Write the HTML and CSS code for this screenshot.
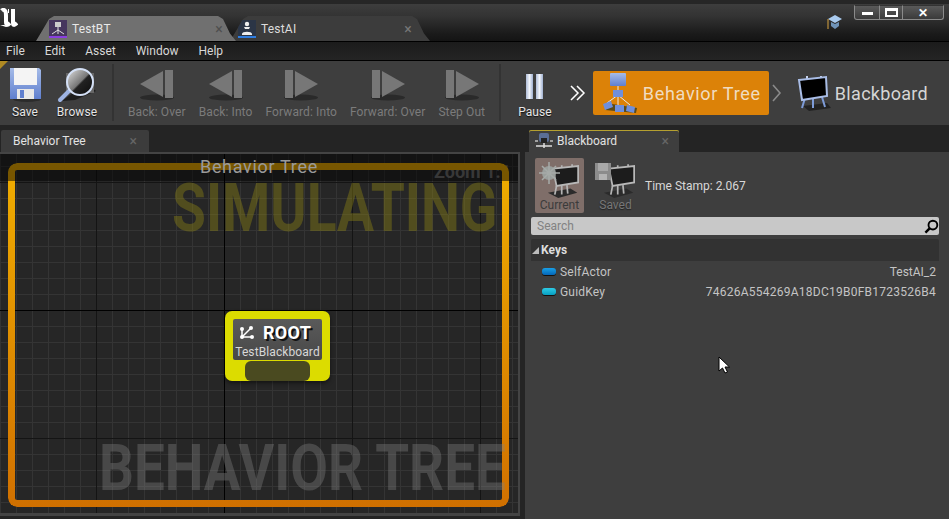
FILE: index.html
```html
<!DOCTYPE html>
<html lang="en">
<head>
<meta charset="utf-8">
<title>TestBT</title>
<link rel="stylesheet" href="styles.css">
</head>
<body>
<svg class="defs" width="0" height="0" aria-hidden="true">
  <defs>
    <linearGradient id="blueg" x1="0" y1="0" x2="0" y2="1"><stop offset="0" stop-color="#a6bce8"/><stop offset="1" stop-color="#5f7fcf"/></linearGradient>
    <linearGradient id="pauseg" x1="0" y1="0" x2="1" y2="0"><stop offset="0" stop-color="#aebcd8"/><stop offset=".5" stop-color="#f2f5fb"/><stop offset="1" stop-color="#9fb0d0"/></linearGradient>
    <linearGradient id="lens" x1="0" y1="0" x2="1" y2="1"><stop offset="0" stop-color="#e4e4e4"/><stop offset=".5" stop-color="#777"/><stop offset=".55" stop-color="#222"/><stop offset="1" stop-color="#0c0c0c"/></linearGradient>
    <symbol id="back" viewBox="0 0 36 32">
      <ellipse cx="18" cy="28.500" rx="17" ry="3" fill="#2a2a2a"/>
      <path d="M1 15 24 2V28Z" fill="#777"/>
      <rect x="26" y="1" width="8" height="28" fill="#777"/>
    </symbol>
    <symbol id="fwd" viewBox="0 0 36 32">
      <ellipse cx="18" cy="28.500" rx="17" ry="3" fill="#2a2a2a"/>
      <rect x="2" y="1" width="8" height="28" fill="#777"/>
      <path d="M12 2 35 15 12 28Z" fill="#777"/>
    </symbol>
    <symbol id="board" viewBox="0 0 34 36">
      <path d="M6 31 30 28 34 33 12 36Z" fill="#222"/>
      <path d="M8 23 5 33M25 22 28 32M16 23V33" stroke="#7d9bd8" stroke-width="2" fill="none"/>
      <path d="M10 1V4M24 1V3" stroke="#c8d4ee" stroke-width="2"/>
      <path d="M2 5 29 2 30 21 5 25Z" fill="#000" stroke="#a9bde6" stroke-width="2"/>
    </symbol>
    <symbol id="tree" viewBox="0 0 36 42">
      <path d="M16 14V23M16 23 5 31M16 23V33M16 23 28 33" stroke="#e8e8e8" stroke-width="1" fill="none"/>
      <path d="M3 38 34 41 35 36 10 32Z" fill="#5a4a18"/>
      <rect x="8" y="1" width="16" height="13" rx="1" fill="url(#blueg)"/>
      <rect x="11" y="18" width="10" height="7" fill="#6f8fdc"/>
      <path d="M1 32 9 29 11 35 3 38ZM13 33H22V40H13ZM25 33 33 35 32 41 24 39Z" fill="#6f8fdc"/>
    </symbol>
    <symbol id="greyboard" viewBox="0 0 44 44">
      <path d="M8 38 34 33 42 38 20 44Z" fill="#2b2b2b"/>
      <path d="M18 30 16 40M30 29 31 39M24 30V40" stroke="#b4b4b4" stroke-width="2" fill="none"/>
      <path d="M24 6V9M36 5V8" stroke="#b4b4b4" stroke-width="2"/>
      <path d="M14 10 43 7 43 26 18 30Z" fill="#1c1c1c" stroke="#b8b8b8" stroke-width="2"/>
    </symbol>
  </defs>
</svg>

<div class="app">
  <header class="titlebar">
    <svg class="logo" viewBox="0 0 18 20"><path d="M2 2C6 1 6 5 6 8V14C6 17 8 17 10 15M8 3 9 3" fill="none" stroke="#fff" stroke-width="4"/><path d="M13 1V15C13 17 14 18 17 15" fill="none" stroke="#fff" stroke-width="4"/><path d="M0 1 4 0 2 3ZM0 17 6 19 10 18 4 17Z" fill="#fff"/></svg>
    <div class="doc-tabs">
      <div class="doc-tab doc-tab-on">
        <svg class="tab-ico" viewBox="0 0 18 18"><rect width="18" height="18" fill="#46365e"/><rect y="16" width="18" height="2" fill="#8a3fe0"/><path d="M9 7V11M3 14 9 10 15 14M9 10V14" stroke="#ddd" fill="none"/><rect x="6" y="2" width="6" height="5" fill="#ccc"/></svg>
        <span class="doc-tab-name">TestBT</span>
        <span class="close">×</span>
      </div>
      <div class="doc-tab doc-tab-ai">
        <svg class="tab-ico" viewBox="0 0 18 18"><rect width="18" height="18" fill="#2b3546"/><rect y="16" width="18" height="2" fill="#2f7de0"/><circle cx="9" cy="4" r="2.200" fill="#eee"/><path d="M6 7H12L11 9H7ZM4 14C4 11 14 11 14 14V15H4Z" fill="#eee"/></svg>
        <span class="doc-tab-name">TestAI</span>
        <span class="close">×</span>
      </div>
    </div>
    <svg class="hat" viewBox="0 0 16 16"><path d="M1 5 8 1 15 5 8 9Z" fill="#a9cbef"/><path d="M4 8V12L8 15 12 12V8L8 10Z" fill="#6f93b8"/><path d="M1 5V15" stroke="#d9a441"/></svg>
    <div class="winbtns">
      <span class="winbtn win-min"><i class="min-g"></i></span>
      <span class="winbtn win-max"><i class="max-g"></i></span>
      <span class="winbtn win-close">✕</span>
    </div>
  </header>

  <nav class="menubar">
    <span>File</span><span>Edit</span><span>Asset</span><span>Window</span><span>Help</span>
  </nav>

  <div class="toolbar">
    <i class="corner"></i>
    <div class="group group-file">
      <div class="tool">
        <svg class="ico-save" viewBox="0 0 32 36"><ellipse cx="18" cy="32" rx="14" ry="3" fill="#2b2b2b"/><path d="M1 1H30L32 3V32H1Z" fill="url(#blueg)"/><rect x="5" y="1" width="23" height="17" fill="#f4f4f4"/><rect x="8" y="22" width="17" height="10" fill="#e8e8e8"/><rect x="11" y="23" width="4" height="8" fill="#5f7fcf"/></svg>
        <span>Save</span>
      </div>
      <div class="tool">
        <svg class="ico-browse" viewBox="0 0 42 36"><path d="M6 34 19 33 40 24 30 16Z" fill="#1e1e1e"/><path d="M10 6H38V26H10Z" fill="#666"/><path d="M4 33 15 22" stroke="#9db4e4" stroke-width="4" stroke-linecap="round"/><circle cx="24" cy="15" r="13" fill="url(#lens)" stroke="#d4e0f6" stroke-width="2"/></svg>
        <span>Browse</span>
      </div>
    </div>
    <i class="vsep"></i>
    <div class="group group-debug">
      <div class="tool tool-off"><svg class="step-ico"><use href="#back"/></svg><span>Back: Over</span></div>
      <div class="tool tool-off"><svg class="step-ico"><use href="#back"/></svg><span>Back: Into</span></div>
      <div class="tool tool-off"><svg class="step-ico"><use href="#fwd"/></svg><span>Forward: Into</span></div>
      <div class="tool tool-off"><svg class="step-ico"><use href="#fwd"/></svg><span>Forward: Over</span></div>
      <div class="tool tool-off"><svg class="step-ico"><use href="#fwd"/></svg><span>Step Out</span></div>
    </div>
    <i class="vsep"></i>
    <div class="tool tool-pause">
      <svg class="ico-pause" viewBox="0 0 20 28"><rect x="1" y="1" width="7" height="25" fill="url(#pauseg)"/><rect x="11" y="1" width="7" height="25" fill="url(#pauseg)"/></svg>
      <span>Pause</span>
    </div>
    <svg class="dbl" viewBox="0 0 16 16"><path d="M1 1 8 8 1 15M7 1 14 8 7 15" fill="none" stroke="#fff" stroke-width="1.500"/></svg>
    <div class="crumb crumb-on">
      <svg class="crumb-tree"><use href="#tree"/></svg>
      <span>Behavior Tree</span>
    </div>
    <svg class="chev" viewBox="0 0 10 18"><path d="M1 1 8 9 1 17" fill="none" stroke="#8a8a8a" stroke-width="1.600"/></svg>
    <div class="crumb">
      <svg class="crumb-board"><use href="#board"/></svg>
      <span>Blackboard</span>
    </div>
  </div>

  <main class="dock">
    <section class="left">
      <div class="tabstrip">
        <div class="dock-tab dock-tab-bt">
          <span class="dock-name">Behavior Tree</span>
          <span class="close">×</span>
        </div>
      </div>
      <div class="graph">
        <div class="zoom">Zoom 1:1</div>
        <div class="frame"></div>
        <div class="wm wm-sim">SIMULATING</div>
        <div class="wm wm-bt">BEHAVIOR TREE</div>
        <div class="graph-head"></div>
        <div class="graph-title">Behavior Tree</div>
        <div class="node">
          <div class="node-body">
            <div class="node-head">
              <svg class="node-ico" viewBox="0 0 16 16"><path d="M3 13 12 4M3 13H13M3 13 3 5" stroke="#fff" stroke-width="1.500" fill="none"/><circle cx="3" cy="13" r="2" fill="#fff"/><circle cx="3" cy="5" r="2" fill="#fff"/><circle cx="12" cy="4" r="2" fill="#fff"/><circle cx="13" cy="13" r="2" fill="#fff"/></svg>
              <span>ROOT</span>
            </div>
            <div class="node-sub">TestBlackboard</div>
          </div>
          <div class="node-pin"></div>
        </div>
      </div>
    </section>

    <section class="right">
      <div class="tabstrip">
        <div class="dock-tab dock-tab-bb">
          <svg class="bb-ico" viewBox="0 0 18 18"><path d="M1 14H17M9 11V16" stroke="#ddd" stroke-width="1.500"/><rect x="4" y="1" width="10" height="9" rx="2" fill="#5a6e96"/><rect x="6" y="6" width="6" height="5" fill="#222"/><path d="M0 9H3M15 9H18" stroke="#fff"/></svg>
          <span class="dock-name">Blackboard</span>
          <span class="close">×</span>
        </div>
      </div>
      <div class="bb">
        <div class="bb-top">
          <div class="bb-btn bb-btn-on">
            <svg class="bb-btn-ico" viewBox="0 0 44 38"><use href="#greyboard" width="44" height="38"/><circle cx="11" cy="13" r="7" fill="#9a9f9c"/><path d="M11 2V24M1 13H22M4 6 18 20M18 6 4 20" stroke="#a6aba8" stroke-width="1.500"/></svg>
            <span>Current</span>
          </div>
          <div class="bb-btn bb-btn-saved">
            <svg class="bb-btn-ico" viewBox="0 0 44 38"><use href="#greyboard" width="44" height="38"/><path d="M1 3H17V20H1Z" fill="#8c8c8c"/><rect x="4" y="3" width="10" height="8" fill="#a8a8a8"/><rect x="5" y="14" width="8" height="6" fill="#b4b4b4"/></svg>
            <span>Saved</span>
          </div>
          <span class="stamp">Time Stamp: 2.067</span>
        </div>
        <div class="search">
          <span>Search</span>
          <svg class="search-ico" viewBox="0 0 16 16"><circle cx="9.500" cy="6.500" r="4.700" fill="none" stroke="#000" stroke-width="2"/><path d="M6 10 1.500 14.500" stroke="#000" stroke-width="2.600"/></svg>
        </div>
        <div class="keys-head"><i class="tri"></i>Keys</div>
        <div class="key">
          <i class="pin"></i><span class="key-name">SelfActor</span><span class="key-val">TestAI_2</span>
        </div>
        <div class="key">
          <i class="pin pin-guid"></i><span class="key-name">GuidKey</span><span class="key-val key-guid">74626A554269A18DC19B0FB1723526B4</span>
        </div>
      </div>
    </section>
  </main>

  <svg class="cursor" viewBox="0 0 12 18"><path d="M1 1V15L4.500 12 7 17 9.500 16 7 11H11.500Z" fill="#fff" stroke="#000"/></svg>
</div>
</body>
</html>
```

FILE: styles.css
```css
* { box-sizing: border-box; }
html, body { margin: 0; padding: 0; }
body {
  width: 949px;
  height: 519px;
  overflow: hidden;
  background: #242424;
  font-family: Roboto, "Liberation Sans", sans-serif;
  color: #ddd;
}
.defs { position: absolute; }
.app { position: relative; width: 949px; height: 519px; display: flex; flex-direction: column; }

/* title bar */
.titlebar {
  height: 42px;
  display: flex;
  align-items: flex-end;
  position: relative;
  border-top: 4px solid #262626;
  border-bottom: 1px solid #000;
  background: linear-gradient(#3d3d3d 0, #333 12px, #1a1a1a 30px, #141414 100%);
}
.logo { position: absolute; left: 0; top: 4px; width: 18px; height: 20px; }
.doc-tabs { display: flex; margin-left: 36px; }
.doc-tab {
  width: 200px;
  height: 25px;
  padding: 4px 13px 0 13px;
  display: flex;
  align-items: flex-start;
  background: #3c3c3c;
  clip-path: polygon(0 100%, 3% 60%, 6.500% 12%, 9% 0, 91% 0, 93.500% 12%, 97% 70%, 100% 100%);
  font-size: 12px;
  line-height: 18px;
  letter-spacing: .2px;
  color: #dcdcdc;
}
.doc-tab-on { position: relative; z-index: 1; background: #707070; color: #e8e8e8; margin-right: -6px; }
.doc-tab-ai { padding: 4px 18px 0 8px; }
.tab-ico { width: 18px; height: 18px; flex: none; }
.doc-tab-name { margin-left: 5px; flex: 1; }
.close { font-size: 14px; line-height: 18px; color: #777; }
.doc-tab-on .close { color: #4e4e4e; }
.hat { position: absolute; left: 827px; top: 10px; width: 16px; height: 16px; }
.winbtns { position: absolute; left: 854px; top: 1px; display: flex; }
.winbtn {
  height: 15px;
  display: flex;
  align-items: center;
  justify-content: center;
  background: linear-gradient(#5a5a5a, #3a3a3a);
  border: 1px solid #8a8a8a;
  border-top-color: #333;
  margin-right: -1px;
  color: #fff;
  font-size: 12px;
  font-weight: bold;
}
.win-min { width: 26px; border-radius: 0 0 0 3px; }
.win-max { width: 24px; }
.win-close { width: 42px; border-radius: 0 0 3px 0; }
.min-g { width: 11px; height: 3px; background: #fff; margin-top: 2px; }
.max-g { width: 13px; height: 9px; border: 2px solid #fff; border-top-width: 3px; }

/* menu */
.menubar {
  height: 19px;
  display: flex;
  gap: 20px;
  align-items: center;
  padding-left: 6px;
  background: linear-gradient(#1b1b1b, #242424);
  border-bottom: 1px solid #000;
  font-size: 12px;
  color: #d8d8d8;
}

/* toolbar */
.toolbar {
  position: relative;
  height: 64px;
  display: flex;
  align-items: stretch;
  background: #3e3e3e;
  padding: 3px 0 4px;
  flex: none;
}
.corner {
  position: absolute;
  left: 0;
  top: 0;
  width: 0;
  height: 0;
  border-top: 8px solid #b08a22;
  border-right: 8px solid transparent;
}
.group { display: flex; }
.group-file { gap: 15px; margin-left: 9px; }
.group-debug { gap: 13px; margin-left: 14px; }
.tool {
  display: flex;
  flex-direction: column;
  align-items: center;
  justify-content: space-between;
  font-size: 12px;
  line-height: 14px;
  letter-spacing: .1px;
  color: #e6e6e6;
  text-shadow: 0 1px 1px #111;
  padding-bottom: 2px;
}
.tool-off { color: #7b7b7b; text-shadow: none; }
.ico-save { width: 32px; height: 36px; margin-top: 3px; }
.ico-browse { width: 42px; height: 36px; margin-top: 3px; }
.ico-pause { width: 20px; height: 28px; margin-top: 9px; }
.step-ico { width: 36px; height: 32px; margin-top: 5px; }
.vsep { width: 2px; margin-left: 14px; background: #333; }
.tool-pause { margin-left: 17px; }
.dbl { width: 16px; height: 16px; margin: 21px 7px 0 18px; }
.crumb {
  display: flex;
  align-items: center;
  margin-top: 7px;
  height: 44px;
  font-size: 18px;
  letter-spacing: .3px;
  color: #d5d5d5;
}
.crumb-on {
  width: 176px;
  padding-left: 9px;
  gap: 5px;
  background: #dc8208;
  border-radius: 2px;
  letter-spacing: .68px;
  color: #f0dcc0;
}
.crumb-tree { width: 36px; height: 42px; }
.crumb-board { width: 34px; height: 36px; margin-right: 4px; }
.chev { width: 10px; height: 18px; margin: 20px 15px 0 3px; }

/* dock */
.dock { flex: 1; display: flex; min-height: 0; }
.left { width: 525px; display: flex; flex-direction: column; }
.right { flex: 1; display: flex; flex-direction: column; }
.tabstrip { height: 27px; padding-top: 5px; display: flex; flex: none; }
.dock-tab {
  height: 22px;
  display: flex;
  align-items: center;
  background: #3c3c3c;
  border-radius: 2px 2px 0 0;
  font-size: 12px;
  color: #e2e2e2;
}
.dock-tab-bt { width: 148px; margin-left: 1px; padding: 0 12px; }
.dock-tab-bb {
  width: 150px;
  margin-left: 4px;
  padding: 0 10px 0 6px;
  box-shadow: inset 0 1px 0 #b5a030;
  background: #3e3e3e;
}
.dock-name { flex: 1; }
.bb-ico { width: 18px; height: 18px; margin-right: 4px; }
.dock-tab .close { color: #666; }

/* graph */
.graph {
  position: relative;
  width: 520px;
  height: 364px;
  overflow: hidden;
  border-top: 2px solid #444;
  border-right: 2px solid #444;
  border-bottom: 3px solid #444;
  background-color: #262626;
  background-image:
    linear-gradient(#000, #000),
    linear-gradient(#000, #000),
    linear-gradient(90deg, #141414 1px, transparent 1px),
    linear-gradient(#141414 1px, transparent 1px),
    linear-gradient(#343434 1px, transparent 1px),
    linear-gradient(90deg, #343434 1px, transparent 1px);
  background-size: 1px 100%, 100% 1px, 128px 100%, 100% 128px, 16px 16px, 16px 16px;
  background-position: 224px 0, 0 156px, 96px 0, 0 28px, 0 12px, 0 0;
  background-repeat: no-repeat, no-repeat, repeat-x, repeat-y, repeat, repeat;
}
.frame {
  position: absolute;
  left: 8px;
  top: 9px;
  width: 501px;
  height: 344px;
  border: 7px solid transparent;
  border-radius: 9px;
  background: linear-gradient(#f0ae00, #d07000) border-box;
  -webkit-mask: linear-gradient(#000 0 0) padding-box, linear-gradient(#000 0 0);
  -webkit-mask-composite: xor;
  mask-composite: exclude;
}
.wm {
  position: absolute;
  font-weight: bold;
  line-height: 1;
  white-space: nowrap;
  transform-origin: 0 0;
}
.wm-sim {
  left: 172px;
  top: 22px;
  font-size: 66px;
  color: rgba(140, 130, 20, .42);
  transform: scaleX(.835);
}
.wm-bt {
  left: 99px;
  top: 282px;
  font-size: 65px;
  color: rgba(130, 130, 130, .38);
  transform: scaleX(.842);
}
.graph-head {
  position: absolute;
  left: 0;
  right: 0;
  top: 0;
  height: 27px;
  background: rgba(0, 0, 0, .5);
}
.graph-title {
  position: absolute;
  left: 200px;
  top: 2px;
  font-size: 18px;
  line-height: 22px;
  letter-spacing: .68px;
  color: #9a9a9a;
}
.zoom {
  position: absolute;
  left: 434px;
  top: 7px;
  font-size: 18px;
  line-height: 22px;
  font-weight: bold;
  color: #707070;
}
.node {
  position: absolute;
  left: 225px;
  top: 157px;
  width: 105px;
  height: 70px;
  padding: 8px 8px 0;
  background: #dcdc00;
  border-radius: 7px;
  box-shadow: 0 2px 4px rgba(0, 0, 0, .5);
}
.node-body { height: 41px; background: linear-gradient(#5a5a5a, #484848); border-radius: 2px; }
.node-head {
  height: 26px;
  display: flex;
  align-items: center;
  padding-left: 6px;
  gap: 8px;
  font-size: 18px;
  letter-spacing: .3px;
  font-weight: bold;
  color: #fff;
  text-shadow: 2px 2px 0 #111;
}
.node-ico { width: 16px; height: 16px; }
.node-sub { font-size: 12px; line-height: 14px; letter-spacing: .1px; text-align: center; color: #d8d8d8; white-space: nowrap; }
.node-pin { width: 65px; height: 20px; margin: 1px 0 0 12px; background: #4a4a20; border-radius: 6px; }

/* blackboard */
.bb { flex: 1; background: #3e3e3e; padding: 6px 10px 0 6px; }
.bb-top { display: flex; align-items: center; height: 55px; }
.bb-btn {
  width: 49px;
  height: 55px;
  margin-left: 4px;
  display: flex;
  flex-direction: column;
  align-items: center;
  border-radius: 2px;
  font-size: 12px;
  line-height: 14px;
  color: #777;
  text-shadow: 0 1px 1px #222;
  padding-top: 2px;
}
.bb-btn-saved { margin-left: 7px; }
.bb-btn-on { background: #7f6e69; color: #3b3b3b; text-shadow: none; }
.bb-btn-ico { width: 44px; height: 38px; }
.stamp { margin-left: 5px; font-size: 12px; color: #d8d8d8; }
.search {
  height: 18px;
  margin-top: 4px;
  padding: 0 0 0 6px;
  display: flex;
  align-items: center;
  justify-content: space-between;
  background: #c8c8c8;
  border-radius: 2px;
  font-size: 12px;
  color: #828282;
}
.search-ico { width: 15px; height: 15px; }
.keys-head {
  height: 22px;
  margin-top: 4px;
  display: flex;
  align-items: center;
  padding-left: 1px;
  gap: 2px;
  background: #323232;
  border-radius: 2px 2px 0 0;
  font-size: 12px;
  font-weight: bold;
  color: #ddd;
}
.tri { width: 0; height: 0; border-bottom: 7px solid #bbb; border-left: 7px solid transparent; }
.key {
  height: 20px;
  display: flex;
  align-items: center;
  padding: 1px 3px 0 11px;
  font-size: 12px;
  color: #c4c4c4;
}
.pin {
  width: 14px;
  height: 7px;
  margin-right: 4px;
  border-radius: 3px;
  background: linear-gradient(#18a0e6, #0466b8);
  box-shadow: 0 1px 0 #111;
}
.pin-guid { background: linear-gradient(#2ecbe6, #069ec0); }
.key-name { flex: 1; letter-spacing: .2px; }
.key-guid { letter-spacing: .25px; }
.cursor {
  position: absolute;
  left: 718px;
  top: 356px;
  width: 12px;
  height: 18px;
}
```
